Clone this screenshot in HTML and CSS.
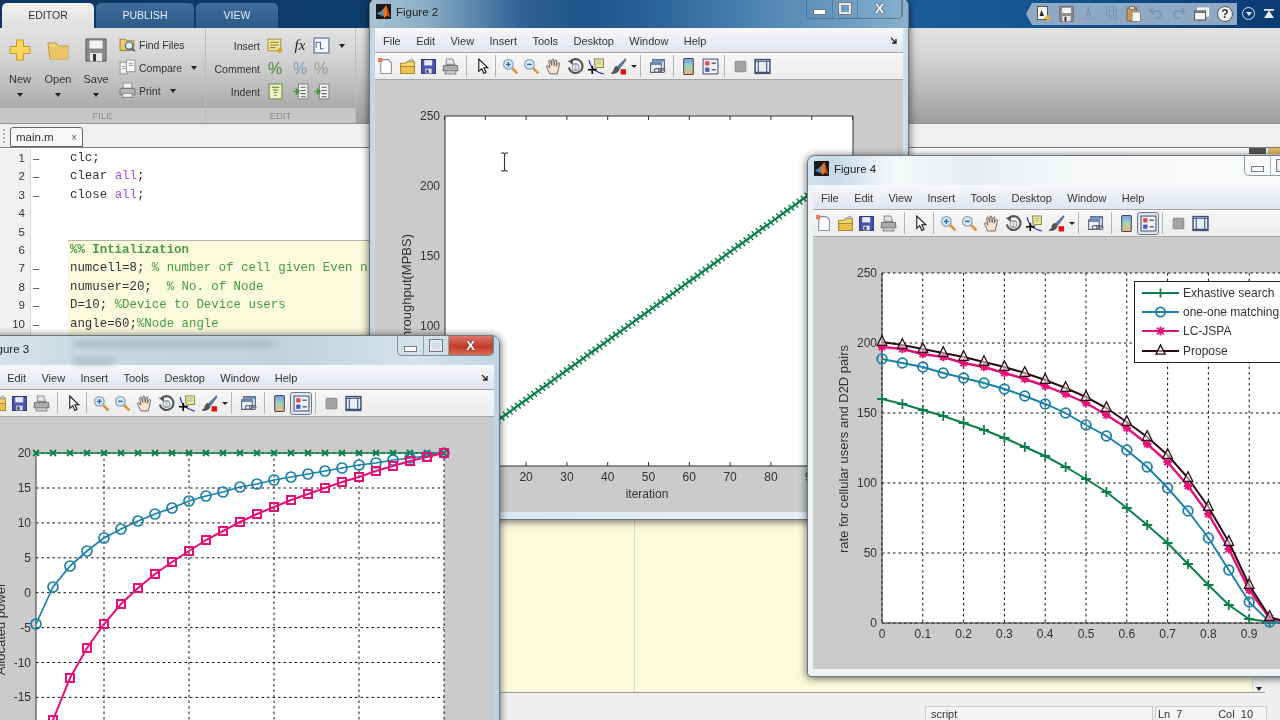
FILE: index.html
```html
<!DOCTYPE html>
<html lang="en">
<head>
  <meta charset="UTF-8">
  <title>MATLAB R2013 - main.m</title>
  <link rel="stylesheet" href="styles.css">
</head>
<body>

<!-- shared icons -->
<svg class="sprite" xmlns="http://www.w3.org/2000/svg">
  <symbol id="i-ml" viewBox="0 0 16 16">
    <rect width="16" height="16" fill="#1a1a1a"/>
    <path d="M1 10l4-2 3-3 3-4 4 13-3-2-3 3-2-4z" fill="#e8761e"/>
    <path d="M1 10l4-2 3-3-1 8z" fill="#3f8fc4"/>
    <path d="M11 1l4 13-3-2z" fill="#c9401a"/>
  </symbol>
  <symbol id="i-new" viewBox="0 0 16 16">
    <path d="M3.500 1.500h7l3 3v10h-10z" fill="#fff" stroke="#7d92a8"/>
    <rect x="1" y="0" width="4" height="4" fill="#e8795a"/>
  </symbol>
  <symbol id="i-open" viewBox="0 0 16 16">
    <path d="M1.500 5h5l1-1.500h7v11h-13z" fill="#f5d667" stroke="#a8883a"/>
    <path d="M1.500 8h13v6.500h-13z" fill="#eec24a" stroke="#a8883a"/>
    <path d="M9 3l3-2 2 2" fill="none" stroke="#8a9aa8"/>
  </symbol>
  <symbol id="i-save" viewBox="0 0 16 16">
    <path d="M1.500 1.500h13v13h-13z" fill="#4a55b0" stroke="#30377a"/>
    <rect x="4" y="2" width="7.500" height="5" fill="#e8eaf4"/>
    <rect x="5" y="10" width="6" height="4.500" fill="#dde"/>
    <rect x="6" y="11" width="2" height="3" fill="#334"/>
  </symbol>
  <symbol id="i-print" viewBox="0 0 16 16">
    <path d="M4 1h6l2 5H4z" fill="#e4e6e8" stroke="#8a8f94"/>
    <path d="M1.500 7h13l.5 5H1z" fill="#a9adb0" stroke="#777"/>
    <path d="M3 12h10v3H3z" fill="#ccc" stroke="#888"/>
  </symbol>
  <symbol id="i-arrow" viewBox="0 0 16 16">
    <path d="M4.500 1v11.500l2.800-2.500 2 4.500 2-1-2-4.300h3.700z" fill="#fff" stroke="#111"/>
  </symbol>
  <symbol id="i-zin" viewBox="0 0 16 16">
    <circle cx="6" cy="6" r="4.500" fill="#d7ebf7" stroke="#8aa4b8" stroke-width="1.200"/>
    <path d="M9.500 9.500l5 5" stroke="#d9913a" stroke-width="2.500"/>
    <path d="M3.800 6h4.400M6 3.800v4.400" stroke="#2760b0" stroke-width="1.300"/>
  </symbol>
  <symbol id="i-zout" viewBox="0 0 16 16">
    <circle cx="6" cy="6" r="4.500" fill="#d7ebf7" stroke="#8aa4b8" stroke-width="1.200"/>
    <path d="M9.500 9.500l5 5" stroke="#d9913a" stroke-width="2.500"/>
    <path d="M3.800 6h4.400" stroke="#2760b0" stroke-width="1.300"/>
  </symbol>
  <symbol id="i-hand" viewBox="0 0 16 16">
    <path d="M4.500 15L1.500 8.500c-.5-1.200 1-1.800 1.700-.8l1.300 1.800L3.500 3c-.2-1.200 1.400-1.400 1.700-.3L6.300 7 6.500 1.800c0-1.200 1.600-1.200 1.700 0L8.600 7l1-4.600c.3-1.100 1.800-.8 1.600.3L10.500 7.800l1.700-3c.6-1 1.900-.3 1.500.7L11.500 15z" fill="#fbe3cf" stroke="#555" stroke-width=".8"/>
  </symbol>
  <symbol id="i-rot" viewBox="0 0 16 16">
    <path d="M3 3.500A6.500 6.500 0 1 1 1.700 9" fill="none" stroke="#555" stroke-width="2"/>
    <path d="M.5 2.500h5v4z" fill="#555"/>
    <circle cx="8" cy="8.500" r="3.200" fill="none" stroke="#89a" stroke-width="1"/>
    <path d="M7 6.500h2M7 8.500h2M7 10.500h2" stroke="#667" stroke-width=".7"/>
  </symbol>
  <symbol id="i-tip" viewBox="0 0 16 16">
    <path d="M6 1h8.500v8H9l-2 2z" fill="#ecec9c" stroke="#8a8a4a"/>
    <path d="M8 3.500h4.500M8 5.500h4.500" stroke="#999" stroke-width=".7"/>
    <path d="M1 2c1 6 4 11 14 13" fill="none" stroke="#2b2bc0"/>
    <path d="M0 11h8M4 7.500v7.500" stroke="#000" stroke-width="1.500"/>
  </symbol>
  <symbol id="i-brush" viewBox="0 0 16 16">
    <path d="M14.500 .5L7 8l2 2 6-8z" fill="#5e7faa" stroke="#34475f" stroke-width=".5"/>
    <path d="M6.500 8C4 8 4 10.500 3.500 12 3 13 2 14 1 14.500c3 .5 6-.5 7-2.500l.5-2z" fill="#555" stroke="#222" stroke-width=".5"/>
    <rect x="10" y="10.500" width="5" height="5" fill="#e80c0c"/>
  </symbol>
  <symbol id="i-link" viewBox="0 0 16 16">
    <path d="M3.500 1.500h11v10h-11z" fill="#d5e0ec" stroke="#4c6482"/>
    <path d="M1.500 4.500h10v9h-10z" fill="#eef2f7" stroke="#4c6482"/>
    <path d="M3.500 1.500h11v2h-11zM1.500 4.500h10v2h-10z" fill="#6d8bb0"/>
    <rect x="5" y="10" width="6" height="3.500" rx="1.700" fill="none" stroke="#667" stroke-width="1.200"/>
    <rect x="9" y="10" width="6" height="3.500" rx="1.700" fill="none" stroke="#667" stroke-width="1.200"/>
  </symbol>
  <symbol id="i-cbar" viewBox="0 0 16 16">
    <defs>
      <linearGradient id="g-cbar" x1="0" y1="0" x2="0" y2="1">
        <stop offset="0" stop-color="#7a9cf0"/><stop offset=".5" stop-color="#9fd8b0"/><stop offset="1" stop-color="#f2b07a"/>
      </linearGradient>
    </defs>
    <rect x="3.500" y=".5" width="9" height="15" rx="1" fill="url(#g-cbar)" stroke="#445"/>
  </symbol>
  <symbol id="i-lgnd" viewBox="0 0 16 16">
    <rect x="1" y="1" width="14" height="14" fill="#f1f2f7" stroke="#4d5678"/>
    <rect x="3" y="3" width="4" height="4" fill="#d84a4a"/>
    <rect x="3" y="9" width="4" height="4" fill="#4b58c8"/>
    <path d="M9 5h4M9 11h4" stroke="#666" stroke-width="1.500"/>
  </symbol>
  <symbol id="i-grey" viewBox="0 0 16 16">
    <rect x="3" y="3" width="10" height="10" rx="1" fill="#a3a3a3" stroke="#8c8c8c"/>
  </symbol>
  <symbol id="i-win" viewBox="0 0 16 16">
    <rect x="1" y="1.500" width="14" height="13" fill="#e9edf4" stroke="#3d527a" stroke-width="1.400"/>
    <path d="M1 3h14M4 3v10M12 3v10M1 13.500h14" stroke="#3d527a"/>
  </symbol>
  <symbol id="i-plus" viewBox="0 0 24 24">
    <path d="M8.500 2h7v6.500H22v7h-6.500V22h-7v-6.500H2v-7h6.500z" fill="#f8d65e" stroke="#c99a2a"/>
  </symbol>
  <symbol id="i-folder" viewBox="0 0 24 24">
    <path d="M2 5h8l2 3h10v13H4z" fill="#f3d378" stroke="#b99540"/>
    <path d="M3.500 9H22v12H4.500z" fill="#eec566"/>
  </symbol>
  <symbol id="i-disk" viewBox="0 0 24 24">
    <rect x="2" y="1" width="20" height="22" fill="#8d8d8d" stroke="#555"/>
    <rect x="5" y="2" width="14" height="9" fill="#f4f4f4" stroke="#888"/>
    <rect x="6" y="15" width="12" height="8" fill="#e8e8e8"/>
    <rect x="9" y="16" width="3" height="7" fill="#333"/>
  </symbol>
  <symbol id="i-find" viewBox="0 0 16 16">
    <path d="M1 3h5l1 1.500h7v9H1z" fill="#eccb6a" stroke="#a98a3c"/>
    <circle cx="9.500" cy="9" r="3.500" fill="#e3f0fa" stroke="#4a6d96" stroke-width="1.300"/>
    <path d="M12 11.500l3 3" stroke="#4a6d96" stroke-width="1.600"/>
  </symbol>
  <symbol id="i-comp" viewBox="0 0 16 16">
    <rect x="1" y="3" width="7" height="11" fill="#f2f2f2" stroke="#999"/>
    <rect x="7" y="1" width="8" height="11" fill="#fafafa" stroke="#999"/>
    <path d="M9 4h4M9 6h4M3 7h3M3 9h3" stroke="#8ba3bd"/>
  </symbol>
  <symbol id="i-prt" viewBox="0 0 16 16">
    <rect x="4" y="1" width="8" height="5" fill="#fafafa" stroke="#999"/>
    <rect x="1" y="6" width="14" height="6" rx="1" fill="#b4b7bb" stroke="#777"/>
    <rect x="3.500" y="10.500" width="9" height="4" fill="#eee" stroke="#888"/>
  </symbol>
  <symbol id="i-ins" viewBox="0 0 16 16">
    <rect x="1" y="2" width="12" height="11" fill="#f7e99c" stroke="#a8953d"/>
    <path d="M3 5h8M3 7.500h8M3 10h5" stroke="#8a7c34"/>
    <path d="M12 10v5M9.500 12.500h5" stroke="#d3a11d" stroke-width="2"/>
  </symbol>
  <symbol id="i-fi" viewBox="0 0 16 16">
    <rect x="1" y="1" width="14" height="14" fill="#fafbfe" stroke="#4a6797"/>
    <path d="M3 10V5h4v6h3" fill="none" stroke="#4a6797"/>
  </symbol>
  <symbol id="i-ind" viewBox="0 0 16 16">
    <rect x="2" y="1" width="12" height="14" fill="#f2f5c9" stroke="#6b9440"/>
    <path d="M4.500 4h7M5.500 6.500h5M6.500 9h3M7 11.500h2" stroke="#4b7a28"/>
  </symbol>
  <symbol id="i-ind2" viewBox="0 0 16 16">
    <rect x="6" y="1" width="9" height="14" fill="#f4f4f4" stroke="#888"/>
    <path d="M8 4h5M8 7h5M8 10h5M8 13h5" stroke="#666"/>
    <path d="M1 8h5M4 5.500L7 8l-3 2.500z" fill="#5aa04a" stroke="#4a8f3a"/>
  </symbol>
  <symbol id="i-scissors" viewBox="0 0 16 16">
    <path d="M9 1L6 10M7 1l3 9" stroke="#7d93ad" stroke-width="1.200"/>
    <rect x="2" y="11" width="12" height="3" fill="#8aa0ba"/>
  </symbol>
  <symbol id="i-copy" viewBox="0 0 16 16">
    <rect x="3" y="1" width="7" height="9" fill="none" stroke="#7d93ad"/>
    <rect x="6" y="4" width="7" height="9" fill="none" stroke="#7d93ad"/>
  </symbol>
  <symbol id="i-paste" viewBox="0 0 16 16">
    <rect x="1.500" y="2" width="10" height="13" fill="#c79b5e" stroke="#7f6238"/>
    <rect x="4" y="0.500" width="5" height="3" fill="#ddd" stroke="#777"/>
    <rect x="6.500" y="6" width="8.500" height="9.500" fill="#f6f6f6" stroke="#888"/>
  </symbol>
  <symbol id="i-undo" viewBox="0 0 16 16">
    <path d="M5 2L1.500 5 5 8M2 5h7c5 0 5 7 0 7H6" fill="none" stroke="#7d93ad" stroke-width="1.300"/>
  </symbol>
  <symbol id="i-redo" viewBox="0 0 16 16">
    <path d="M11 2l3.500 3L11 8M14 5H7c-5 0-5 7 0 7h3" fill="none" stroke="#7d93ad" stroke-width="1.300"/>
  </symbol>
  <symbol id="i-swin" viewBox="0 0 16 16">
    <rect x="4" y="2" width="11" height="8" fill="#e8e8e8" stroke="#fff"/>
    <rect x="1" y="5" width="11" height="9" fill="#f4f4f4" stroke="#555"/>
    <rect x="1" y="5" width="11" height="2" fill="#777"/>
  </symbol>
  <symbol id="i-newq" viewBox="0 0 16 16">
    <rect x="2" y="0.500" width="10" height="13" fill="#f6f6f6" stroke="#555"/>
    <path d="M4 10l2-6 2.500 6z" fill="#222"/>
    <path d="M12 9v6M9 12h6" stroke="#e3b02a" stroke-width="2.200"/>
  </symbol>
</svg>

<template id="fig-bars">
  <div class="fig-menu">
    <span>File</span><span>Edit</span><span>View</span><span>Insert</span><span>Tools</span><span>Desktop</span><span>Window</span><span>Help</span>
    <svg class="dock" viewBox="0 0 8 8"><path d="M1 1l5 5M6 2v4H2" fill="none" stroke="#222" stroke-width="1.300"/></svg>
  </div>
  <div class="fig-tools">
    <svg class="tool"><use href="#i-new"/></svg>
    <svg class="tool"><use href="#i-open"/></svg>
    <svg class="tool"><use href="#i-save"/></svg>
    <svg class="tool"><use href="#i-print"/></svg>
    <i class="sep s1"></i>
    <svg class="tool"><use href="#i-arrow"/></svg>
    <i class="sep s2"></i>
    <svg class="tool"><use href="#i-zin"/></svg>
    <svg class="tool"><use href="#i-zout"/></svg>
    <svg class="tool"><use href="#i-hand"/></svg>
    <svg class="tool"><use href="#i-rot"/></svg>
    <svg class="tool"><use href="#i-tip"/></svg>
    <svg class="tool"><use href="#i-brush"/></svg>
    <b class="caret"></b>
    <i class="sep s3"></i>
    <svg class="tool"><use href="#i-link"/></svg>
    <i class="sep s4"></i>
    <svg class="tool"><use href="#i-cbar"/></svg>
    <span class="toggle"><svg class="tool"><use href="#i-lgnd"/></svg></span>
    <i class="sep s5"></i>
    <svg class="tool"><use href="#i-grey"/></svg>
    <svg class="tool"><use href="#i-win"/></svg>
  </div>
</template>

<div class="desktop">

  <div class="matlab">
    <div class="tabstrip">
      <span class="rtab active">EDITOR</span>
      <span class="rtab publish">PUBLISH</span>
      <span class="rtab view">VIEW</span>
      <div class="quick">
        <svg><use href="#i-newq"/></svg>
        <svg><use href="#i-disk"/></svg>
        <svg><use href="#i-scissors"/></svg>
        <svg><use href="#i-copy"/></svg>
        <svg><use href="#i-paste"/></svg>
        <svg><use href="#i-undo"/></svg>
        <svg><use href="#i-redo"/></svg>
        <svg><use href="#i-swin"/></svg>
        <span class="help">?</span>
      </div>
      <span class="roundbtn"></span>
      <span class="collapse"></span>
    </div>

    <div class="ribbon">
      <div class="group group-file">
        <div class="group-body">
          <div class="big"><svg><use href="#i-plus"/></svg><span>New</span><b class="caret"></b></div>
          <div class="big"><svg><use href="#i-folder"/></svg><span>Open</span><b class="caret"></b></div>
          <div class="big"><svg><use href="#i-disk"/></svg><span>Save</span><b class="caret"></b></div>
          <div class="small-stack">
            <div><svg><use href="#i-find"/></svg>Find Files</div>
            <div><svg><use href="#i-comp"/></svg>Compare<b class="caret"></b></div>
            <div><svg><use href="#i-prt"/></svg>Print<b class="caret"></b></div>
          </div>
        </div>
        <div class="group-name">FILE</div>
      </div>
      <div class="group group-edit">
        <div class="edit-grid">
          <span>Insert</span><svg><use href="#i-ins"/></svg><em class="fx">fx</em><svg><use href="#i-fi"/></svg><b class="caret"></b>
          <span>Comment</span><em class="pct">%</em><em class="pct blue">%</em><em class="pct grey">%</em><i></i>
          <span>Indent</span><svg><use href="#i-ind"/></svg><svg><use href="#i-ind2"/></svg><svg><use href="#i-ind2"/></svg><i></i>
        </div>
        <div class="group-name">EDIT</div>
      </div>
    </div>

    <div class="doc-tabs">
      <span class="grip"></span>
      <span class="doc-tab">main.m<small>×</small></span>
      <span class="doc-mark dark"></span>
      <span class="doc-mark orange"></span>
    </div>

    <div class="editor">
      <div class="gutter">
        <div><span>1</span><b>–</b></div>
        <div><span>2</span><b>–</b></div>
        <div><span>3</span><b>–</b></div>
        <div><span>4</span></div>
        <div><span>5</span></div>
        <div><span>6</span></div>
        <div><span>7</span><b>–</b></div>
        <div><span>8</span><b>–</b></div>
        <div><span>9</span><b>–</b></div>
        <div><span>10</span><b>–</b></div>
      </div>
      <div class="code">
        <div class="ln">clc;</div>
        <div class="ln">clear <span class="str">all</span>;</div>
        <div class="ln">close <span class="str">all</span>;</div>
        <div class="ln">&nbsp;</div>
        <div class="ln">&nbsp;</div>
        <div class="cell">
          <div class="ln com cell-title">%% Intialization</div>
          <div class="ln">numcell=8; <span class="com">% number of cell given Even n</span></div>
          <div class="ln">numuser=20;  <span class="com">% No. of Node</span></div>
          <div class="ln">D=10; <span class="com">%Device to Device users</span></div>
          <div class="ln">angle=60;<span class="com">%Node angle</span></div>
        </div>
      </div>
      <div class="vscroll"><b class="caret"></b></div>
    </div>

    <div class="status">
      <span class="st-box st-type">script</span>
      <span class="st-box st-pos"><span>Ln&nbsp;&nbsp;7</span><span>Col&nbsp;&nbsp;10</span></span>
    </div>
  </div>

  <section class="fig fig2">
    <header class="glass">
      <svg class="ml"><use href="#i-ml"/></svg><span>Figure 2</span>
      <div class="caption"><span class="c-min"></span><span class="c-max"></span><span class="c-close">X</span></div>
    </header>
    <div class="fig-bars"></div>
    <svg class="plot" id="plot2" viewBox="375 80 528 432"></svg>
  </section>

  <section class="fig fig4">
    <header class="glass">
      <svg class="ml"><use href="#i-ml"/></svg><span>Figure 4</span>
      <div class="caption"><span class="c-min"></span><span class="c-max"></span><span class="c-close">X</span></div>
    </header>
    <div class="fig-bars pressed"></div>
    <svg class="plot" id="plot4" viewBox="813 237 528 432"></svg>
  </section>

  <section class="fig fig3">
    <header class="glass">
      <i class="smudge a"></i><i class="smudge b"></i>
      <svg class="ml"><use href="#i-ml"/></svg><span>Figure 3</span>
      <div class="caption"><span class="c-min"></span><span class="c-max"></span><span class="c-close hot">X</span></div>
    </header>
    <div class="fig-bars pressed"></div>
    <svg class="plot" id="plot3" viewBox="-34 417 528 432"></svg>
  </section>

  <svg class="ibeam" viewBox="0 0 9 20"><path d="M1 1h2.500L4.500 2l1-1H8M4.500 2v16M1 19h2.500l1-1 1 1H8" fill="none" stroke="#333" stroke-width="1.100"/></svg>
</div>

<script src="plot.js"></script>
</body>
</html>
```
FILE: styles.css
```css
* {
  margin: 0;
  padding: 0;
  box-sizing: border-box;
}

body {
  width: 1280px;
  height: 720px;
  overflow: hidden;
  font-family: 'Liberation Sans', Arial, sans-serif;
  color: #333;
}

.sprite {
  position: absolute;
  width: 0;
  height: 0;
}

/* the source is a video frame, everything is a little soft */
.desktop {
  position: relative;
  width: 1280px;
  height: 720px;
  overflow: hidden;
  filter: blur(0.4px);
}

/* main window */
.matlab {
  display: flex;
  flex-direction: column;
  width: 1280px;
  height: 720px;
  background: #efefef;
}

.tabstrip {
  display: flex;
  align-items: flex-end;
  height: 28px;
  flex: none;
  padding-left: 2px;
  background: linear-gradient(90deg, #0b3560 0%, #0d4070 40%, #1a5c99 72%, #135390 82%, #0a3a72 100%);
}

.rtab {
  height: 25px;
  margin-right: 2px;
  border-radius: 5px 5px 0 0;
  background: linear-gradient(#3d6d9b, #2d5a87);
  color: #e4edf5;
  font-size: 10.500px;
  line-height: 24px;
  text-align: center;
}

.rtab.active {
  width: 92px;
  background: linear-gradient(#f2f2f2, #dedede);
  color: #333;
}

.rtab.publish {
  width: 98px;
}

.rtab.view {
  width: 82px;
}

.quick {
  display: flex;
  align-items: center;
  gap: 3.500px;
  height: 22px;
  margin: 0 0 3px auto;
  padding: 0 4px 0 8px;
  background: #8fa8c4;
  clip-path: polygon(6px 0, 100% 0, 100% 100%, 6px 100%, 0 50%);
}

.quick svg {
  width: 19px;
  height: 16px;
}

.help {
  width: 16px;
  height: 16px;
  margin-left: 3px;
  border-radius: 50%;
  background: #f2f2f2;
  border: 1px solid #555;
  color: #333;
  font-size: 12px;
  font-weight: bold;
  line-height: 14px;
  text-align: center;
}

.roundbtn {
  display: flex;
  justify-content: center;
  align-items: center;
  width: 13px;
  height: 13px;
  margin: 0 0 8px 5px;
  border: 1.500px solid #dfe9f2;
  border-radius: 50%;
}

.roundbtn::before {
  content: '';
  border: 3px solid transparent;
  border-top: 4px solid #e8eff5;
  border-bottom: 0;
}

.collapse {
  width: 10px;
  height: 9px;
  margin: 0 6px 10px 9px;
  background: #e4ecf4;
  clip-path: polygon(0 0, 100% 0, 100% 20%, 52% 20%, 100% 100%, 0 100%, 48% 20%, 0 20%);
}

.ribbon {
  display: flex;
  height: 96px;
  flex: none;
  background: linear-gradient(#e2e2e2, #d4d4d4 30%, #b0b0b0 78%, #9f9f9f);
  border-bottom: 1px solid #8f8f8f;
}

.group {
  display: flex;
  flex-direction: column;
  border-right: 1px solid #bcbcbc;
}

.group-file {
  width: 206px;
}

.group-edit {
  width: 150px;
}

.group-name {
  height: 15px;
  margin-top: auto;
  background: #c6c6c6;
  color: #8b8b8b;
  font-size: 9.500px;
  line-height: 15px;
  text-align: center;
}

.group-body {
  display: flex;
  padding-left: 1px;
}

.big {
  display: flex;
  flex-direction: column;
  align-items: center;
  width: 38px;
  padding-top: 9px;
  font-size: 11px;
}

.big svg {
  width: 24px;
  height: 26px;
}

.big span {
  margin-top: 10px;
}

.big .caret {
  margin-top: 8px;
}

.caret {
  display: inline-block;
  width: 0;
  height: 0;
  border: 3.500px solid transparent;
  border-top: 4px solid #222;
  border-bottom: 0;
}

.small-stack {
  width: 90px;
  padding: 5px 0 0 4px;
  font-size: 10.500px;
}

.small-stack div {
  display: flex;
  align-items: center;
  height: 23px;
  gap: 3px;
}

.small-stack svg {
  width: 17px;
  height: 17px;
}

.small-stack .caret {
  margin-left: 6px;
}

.edit-grid {
  display: grid;
  grid-template-columns: 54px 30px 20px 22px 20px;
  grid-auto-rows: 23px;
  align-items: center;
  justify-items: center;
  padding-top: 6px;
  font-size: 10.500px;
}

.edit-grid span {
  justify-self: end;
}

.edit-grid svg {
  width: 17px;
  height: 17px;
}

.fx {
  color: #222;
  font-family: 'Liberation Serif', serif;
  font-size: 15px;
}

.pct {
  color: #4d8a2c;
  font-size: 16px;
  font-style: normal;
  line-height: 16px;
}

.pct.blue {
  color: #7d9cc0;
}

.pct.grey {
  color: #9a9a9a;
}

.doc-tabs {
  position: relative;
  display: flex;
  align-items: flex-end;
  height: 24px;
  flex: none;
  padding-left: 10px;
  background: #f0f0f0;
  border-bottom: 1px solid #7d7d7d;
}

.grip {
  position: absolute;
  left: 3px;
  top: 5px;
  width: 2px;
  height: 14px;
  border-left: 2px dotted #b5b5b5;
}

.doc-tab {
  display: flex;
  justify-content: space-between;
  align-items: center;
  width: 73px;
  height: 20px;
  padding: 0 5px;
  background: #f7f7f7;
  border: 1px solid #666;
  border-radius: 3px 3px 0 0;
  font-size: 11.500px;
}

.doc-tab small {
  color: #555;
  font-size: 10px;
}

.doc-mark {
  position: absolute;
  bottom: -7px;
  height: 6px;
}

.doc-mark.dark {
  left: 1249px;
  width: 17px;
  background: #555;
}

.doc-mark.orange {
  left: 1268px;
  width: 12px;
  background: #e8b765;
}

.editor {
  display: flex;
  flex: 1;
  min-height: 0;
  margin-right: 15px;
  padding-top: 1px;
  background: #fff;
  border-bottom: 1px solid #9a9a9a;
}

.gutter {
  width: 68px;
  flex: none;
  background: linear-gradient(90deg, #f1f1f1 30px, #d5d5d5 30px, #d5d5d5 31px, #fff 31px);
  font-size: 11.500px;
}

.gutter div {
  position: relative;
  height: 18.400px;
  line-height: 18.400px;
}

.gutter span {
  display: block;
  width: 25px;
  text-align: right;
}

.gutter b {
  position: absolute;
  left: 33px;
  top: 0;
  font-weight: normal;
}

.code {
  display: flex;
  flex-direction: column;
  flex: 1;
  font-family: 'Liberation Mono', monospace;
  font-size: 12.400px;
  line-height: 18.400px;
}

.ln {
  height: 18.400px;
  padding-left: 2px;
  white-space: pre;
}

.str {
  color: #a84ee0;
}

.com {
  color: #459c45;
}

.cell-title {
  font-weight: bold;
}

.cell {
  flex: 1;
  margin-top: -1px;
  border-top: 1px solid #b4b4b4;
  background: linear-gradient(#dcdbc6, #dcdbc6) 566px 0 / 1px 100% no-repeat #fbfadc;
}

.vscroll {
  display: flex;
  justify-content: center;
  align-items: flex-end;
  width: 13px;
  flex: none;
  padding-bottom: 1px;
  background: #f0f0f0;
  border-left: 1px solid #dedede;
}

.status {
  display: flex;
  align-items: flex-end;
  height: 27px;
  flex: none;
  padding-left: 925px;
  gap: 2px;
  font-size: 11px;
}

.st-box {
  height: 14px;
  padding: 0 5px;
  background: #f4f4f4;
  border: 1px solid #cfcfcf;
  border-bottom: 0;
  line-height: 15px;
}

.st-type {
  width: 228px;
}

.st-pos {
  display: flex;
  justify-content: space-between;
  width: 112px;
  padding: 0 13px 0 2px;
}

/* figure windows, free on the desktop */
.fig {
  position: absolute;
  display: flex;
  flex-direction: column;
  width: 540px;
  height: 522px;
  padding: 0 5px 7px;
  background: #dbe8f1;
  border: 1px solid #6c7680;
  border-radius: 8px 8px 4px 4px;
  box-shadow: 0 1px 9px rgba(0, 0, 0, 0.65);
}

.fig2 {
  left: 369px;
  top: -2px;
  background: linear-gradient(90deg, #c1d5e2, #d8e6f0 3%, #e8f1f7 97%, #c9dbe8);
}

.fig3 {
  left: -40px;
  top: 335px;
  background: linear-gradient(90deg, #dbe8ef, #e4eef2 95%, #b9cfe0);
}

.fig4 {
  left: 807px;
  top: 155px;
  background: #eef3f6;
}

.glass {
  position: relative;
  display: flex;
  align-items: center;
  height: 29px;
  flex: none;
  margin: 0 -5px;
  padding: 0 0 4px 6px;
  border-radius: 8px 8px 0 0;
  font-size: 11.500px;
  color: #222;
}

.fig2 .glass {
  background: linear-gradient(90deg, #a7c2d3 0%, #8cafc6 10%, #2f6294 28%, #1d5489 40%, #2d669b 55%, #4d84b0 72%, #6b9cc2 88%, #8ab0cd 100%);
}

.fig3 .glass {
  background: linear-gradient(90deg, #d7e6ec, #c4d8df 30%, #bed3db 60%, #d3e3ea 85%, #c0d5e2);
}

.fig4 .glass {
  background: linear-gradient(90deg, #cfe1ec, #c5dbe9 5%, #f6f8f9 16%, #e6edf1 30%, #f6f8f9 50%, #fbfcfc 100%);
}

/* blurred text of the window behind the glass */
.smudge {
  position: absolute;
  height: 6px;
  background: #a5b8bf;
  filter: blur(3px);
}

.smudge.a {
  left: 112px;
  top: 5px;
  width: 200px;
}

.smudge.b {
  left: 112px;
  top: 22px;
  width: 40px;
}

.ml {
  position: relative;
  width: 15px;
  height: 15px;
  margin-right: 5px;
}

.caption {
  position: relative;
  display: flex;
  align-self: flex-start;
  height: 20px;
  margin-left: auto;
  margin-right: 5px;
  color: #fff;
  border: 1px solid rgba(70, 90, 110, 0.6);
  border-top: 0;
  border-radius: 0 0 5px 5px;
  overflow: hidden;
}

.caption span {
  display: flex;
  justify-content: center;
  align-items: center;
  border-right: 1px solid rgba(70, 90, 110, 0.45);
}

.c-min {
  width: 26px;
}

.c-min::before {
  content: '';
  width: 11px;
  height: 4px;
  margin-top: 6px;
  background: #fff;
  border: 1px solid #778;
}

.c-max {
  width: 25px;
}

.c-max::before {
  content: '';
  width: 8px;
  height: 7px;
  border: 2px solid #e8e8e8;
  box-shadow: 0 0 0 1px #778;
}

.c-close {
  width: 44px;
  font-size: 13px;
  font-weight: bold;
  line-height: 1;
  text-shadow: 0 0 2px #334;
}

.c-close.hot {
  background: linear-gradient(#d9786e, #c43b2c 55%, #d86a50);
}

.fig-menu {
  display: flex;
  align-items: center;
  height: 25px;
  flex: none;
  gap: 15.400px;
  padding: 1px 0 0 8px;
  background: linear-gradient(#f7f8fa, #e1e4ef);
  border-bottom: 1px solid #a6a6a6;
  font-size: 11px;
}

.dock {
  width: 8px;
  height: 8px;
  margin-left: auto;
  margin-right: 5px;
}

.fig-tools {
  display: flex;
  align-items: center;
  height: 27px;
  flex: none;
  background: linear-gradient(#f7f7f7, #ececec);
  border-bottom: 1px solid #a6a6a6;
}

.tool {
  width: 17px;
  height: 17px;
  margin: 0 2.300px;
}

.toggle {
  display: flex;
  align-items: center;
  height: 23px;
  border: 1px solid transparent;
  border-radius: 3px;
}

.toggle .tool {
  margin: 0 1.300px;
}

.pressed .toggle {
  background: #e1e5ec;
  border-color: #6e7a8c;
}

.sep {
  width: 1px;
  height: 22px;
  flex: none;
  background: #b4b4b4;
}

.s1 {
  margin: 0 4px 0 5px;
}

.s2 {
  margin: 0 3px 0 2.500px;
}

.s3 {
  margin: 0 6px 0 3px;
}

.s4 {
  margin: 0 4px 0 4px;
}

.s5 {
  margin: 0 5px 0 3px;
}

.fig-tools .caret {
  margin-left: 2px;
  border-width: 3px;
  border-bottom: 0;
}

.fig-bars {
  flex: none;
}

.plot {
  display: block;
  width: 528px;
  height: 432px;
  flex: none;
  background: #cbcbcb;
  font-family: 'Liberation Sans', Arial, sans-serif;
  font-size: 12px;
}

.ibeam {
  position: absolute;
  left: 500px;
  top: 152px;
  width: 9px;
  height: 20px;
}
```
FILE: plot.js
```js
const NS = 'http://www.w3.org/2000/svg';
const GREEN = '#0c7f4a', BLUE = '#1a80a8', PINK = '#e60f78', DARK = '#2b0a12';

// menu and toolbar are the same in every figure window
document.querySelectorAll('.fig-bars').forEach(function (slot) {
  slot.appendChild(document.getElementById('fig-bars').content.cloneNode(true));
});

function add(svg, tag, attrs, text) {
  const node = document.createElementNS(NS, tag);
  for (const k in attrs) node.setAttribute(k, attrs[k]);
  if (text !== undefined) node.textContent = text;
  svg.appendChild(node);
  return node;
}

function marker(svg, kind, x, y, color, size, sw) {
  const s = size;
  const a = { fill: 'none', stroke: color, 'stroke-width': sw || 1.7 };
  if (kind === 'o') add(svg, 'circle', Object.assign({ cx: x, cy: y, r: s }, a));
  if (kind === 's') add(svg, 'rect', Object.assign({ x: x - s, y: y - s, width: 2 * s, height: 2 * s }, a));
  if (kind === '^') add(svg, 'path', Object.assign({}, a, { d: `M${x} ${y - s - 1.5}L${x + s} ${y + s - 1.5}H${x - s}Z`, fill: 'rgba(255,255,255,.5)', 'stroke-width': 1.3 }));
  if (kind === '+' || kind === '*') add(svg, 'path', Object.assign({ d: `M${x - s} ${y}H${x + s}M${x} ${y - s}V${y + s}` }, a));
  if (kind === 'x' || kind === '*') add(svg, 'path', Object.assign({ d: `M${x - s * 0.75} ${y - s * 0.75}L${x + s * 0.75} ${y + s * 0.75}M${x + s * 0.75} ${y - s * 0.75}L${x - s * 0.75} ${y + s * 0.75}` }, a));
}

function series(svg, xs, ys, color, kind, size, width, sw) {
  const pts = ys.map(function (y, i) { return xs[i] + ',' + y; }).join(' ');
  add(svg, 'polyline', { points: pts, fill: 'none', stroke: color, 'stroke-width': width || 2 });
  ys.forEach(function (y, i) { marker(svg, kind, xs[i], y, color, size, sw); });
}

function axes(svg, o) {
  add(svg, 'rect', { x: o.left, y: o.top, width: o.right - o.left, height: o.bottom - o.top, fill: '#fff' });
  o.xticks.forEach(function (t) {
    if (o.grid) add(svg, 'line', { x1: t[0], x2: t[0], y1: o.top, y2: o.bottom, stroke: '#111', 'stroke-dasharray': '2.500 3' });
    else {
      add(svg, 'line', { x1: t[0], x2: t[0], y1: o.top, y2: o.top + 4, stroke: '#333' });
      add(svg, 'line', { x1: t[0], x2: t[0], y1: o.bottom, y2: o.bottom - 4, stroke: '#333' });
    }
    if (t[1] !== '') add(svg, 'text', { x: t[0], y: o.bottom + 15, 'text-anchor': 'middle', fill: '#333' }, t[1]);
  });
  o.yticks.forEach(function (t) {
    if (o.grid) add(svg, 'line', { x1: o.left, x2: o.right, y1: t[0], y2: t[0], stroke: '#111', 'stroke-dasharray': '2.500 3' });
    add(svg, 'text', { x: o.left - 5, y: t[0] + 4, 'text-anchor': 'end', fill: '#333' }, t[1]);
  });
  const frame = { fill: 'none', stroke: '#333', 'stroke-width': 1 };
  add(svg, 'path', Object.assign({ d: `M${o.left} ${o.top}V${o.bottom}H${o.right}` }, frame));
  if (!o.grid) add(svg, 'path', Object.assign({ d: `M${o.left} ${o.top}H${o.right}V${o.bottom}` }, frame));
}

function ylabel(svg, x, y, text) {
  add(svg, 'text', { transform: `translate(${x} ${y}) rotate(-90)`, 'text-anchor': 'middle', fill: '#333', 'font-size': 13 }, text);
}

/* Figure 2 - throughput */
(function () {
  const svg = document.getElementById('plot2');
  const xticks = [], yticks = [];
  for (let v = 0; v <= 100; v += 10) xticks.push([444.5 + v * 4.08, v ? String(v) : '']);
  for (let v = 0; v <= 250; v += 50) yticks.push([465.5 - v * 1.398, String(v)]);
  axes(svg, { left: 445, right: 853, top: 116, bottom: 466, xticks: xticks, yticks: yticks });
  ylabel(svg, 411, 290, 'Throughput(MPBS)');
  add(svg, 'text', { x: 647, y: 498, 'text-anchor': 'middle', fill: '#333' }, 'iteration');
  const xs = [], ys = [];
  for (let v = 0; v <= 100; v++) {
    xs.push(444.5 + v * 4.08);
    ys.push(418 - 0.725 * (xs[v] - 501));
  }
  series(svg, xs, ys, GREEN, 'x', 3.8, 1.6, 1.5);
})();

/* Figure 3 - allocated power */
(function () {
  const svg = document.getElementById('plot3');
  const xs = [];
  for (let i = 0; i < 25; i++) xs.push(36 + i * 17);
  const xticks = [5, 10, 15, 20, 25].map(function (v) { return [36 + (v - 1) * 17, '']; });
  const yticks = [];
  for (let v = 20; v >= -20; v -= 5) yticks.push([592.7 - v * 6.98, String(v)]);
  axes(svg, { left: 36, right: 444, top: 453, bottom: 732, xticks: xticks, yticks: yticks, grid: true });
  ylabel(svg, 5, 629, 'Allocated power');
  series(svg, xs, xs.map(function () { return 453; }), GREEN, 'x', 4, 1.6, 1.8);
  series(svg, xs, [624, 587, 566, 551, 538, 529, 521, 514, 508, 501, 496, 492, 487, 484, 480, 477, 474, 471, 468, 465, 463, 460, 458, 456, 453], BLUE, 'o', 5, 1.7, 1.7);
  series(svg, xs, [772, 720, 678, 648, 624, 604, 588, 574, 562, 551, 540, 531, 522, 514, 507, 500, 494, 488, 482, 477, 471, 466, 461, 457, 453], PINK, 's', 4, 2, 2);
})();

/* Figure 4 - sum rate */
(function () {
  const svg = document.getElementById('plot4');
  const xs = [];
  for (let i = 0; i <= 20; i++) xs.push(882 + i * 20.4);
  const xticks = [], yticks = [];
  for (let v = 0; v <= 10; v++) xticks.push([882 + v * 40.8, v === 0 ? '0' : v === 10 ? '1' : '0.' + v]);
  for (let v = 0; v <= 250; v += 50) yticks.push([623 - v * 1.4, String(v)]);
  axes(svg, { left: 882, right: 1290, top: 273, bottom: 623, xticks: xticks, yticks: yticks, grid: true });
  ylabel(svg, 848, 449, 'rate for cellular users and D2D pairs');
  series(svg, xs, [399, 404, 410, 416, 423, 430, 438, 447, 456, 467, 479, 492, 508, 525, 543, 564, 585, 605, 619, 622, 623], GREEN, '+', 5, 2, 1.8);
  series(svg, xs, [359, 363, 367, 373, 378, 383, 389, 396, 404, 413, 425, 436, 450, 467, 488, 511, 538, 570, 602, 622, 623], BLUE, 'o', 4.8, 1.9, 1.8);
  series(svg, xs, [347, 349, 354, 357, 363, 367, 373, 379, 386, 394, 403, 415, 428, 444, 462, 486, 514, 549, 590, 618, 623], PINK, '*', 4.2, 2.4, 2);
  series(svg, xs, [342, 345, 349, 353, 357, 362, 367, 373, 380, 388, 397, 408, 422, 437, 455, 478, 507, 542, 585, 617, 623], DARK, '^', 4.8, 2);

  // legend sits on the axes
  add(svg, 'rect', { x: 1134.5, y: 281.5, width: 210, height: 81, fill: '#fff', stroke: '#222' });
  const rows = [
    ['Exhastive search', 293, GREEN, '+'],
    ['one-one matching', 312, BLUE, 'o'],
    ['LC-JSPA', 331, PINK, '*'],
    ['Propose', 351, DARK, '^']
  ];
  rows.forEach(function (r) {
    add(svg, 'line', { x1: 1142, x2: 1179, y1: r[1], y2: r[1], stroke: r[2], 'stroke-width': 2 });
    marker(svg, r[3], 1160.5, r[1], r[2], 4.6, 1.8);
    add(svg, 'text', { x: 1183, y: r[1] + 4, fill: '#333' }, r[0]);
  });
})();
```
